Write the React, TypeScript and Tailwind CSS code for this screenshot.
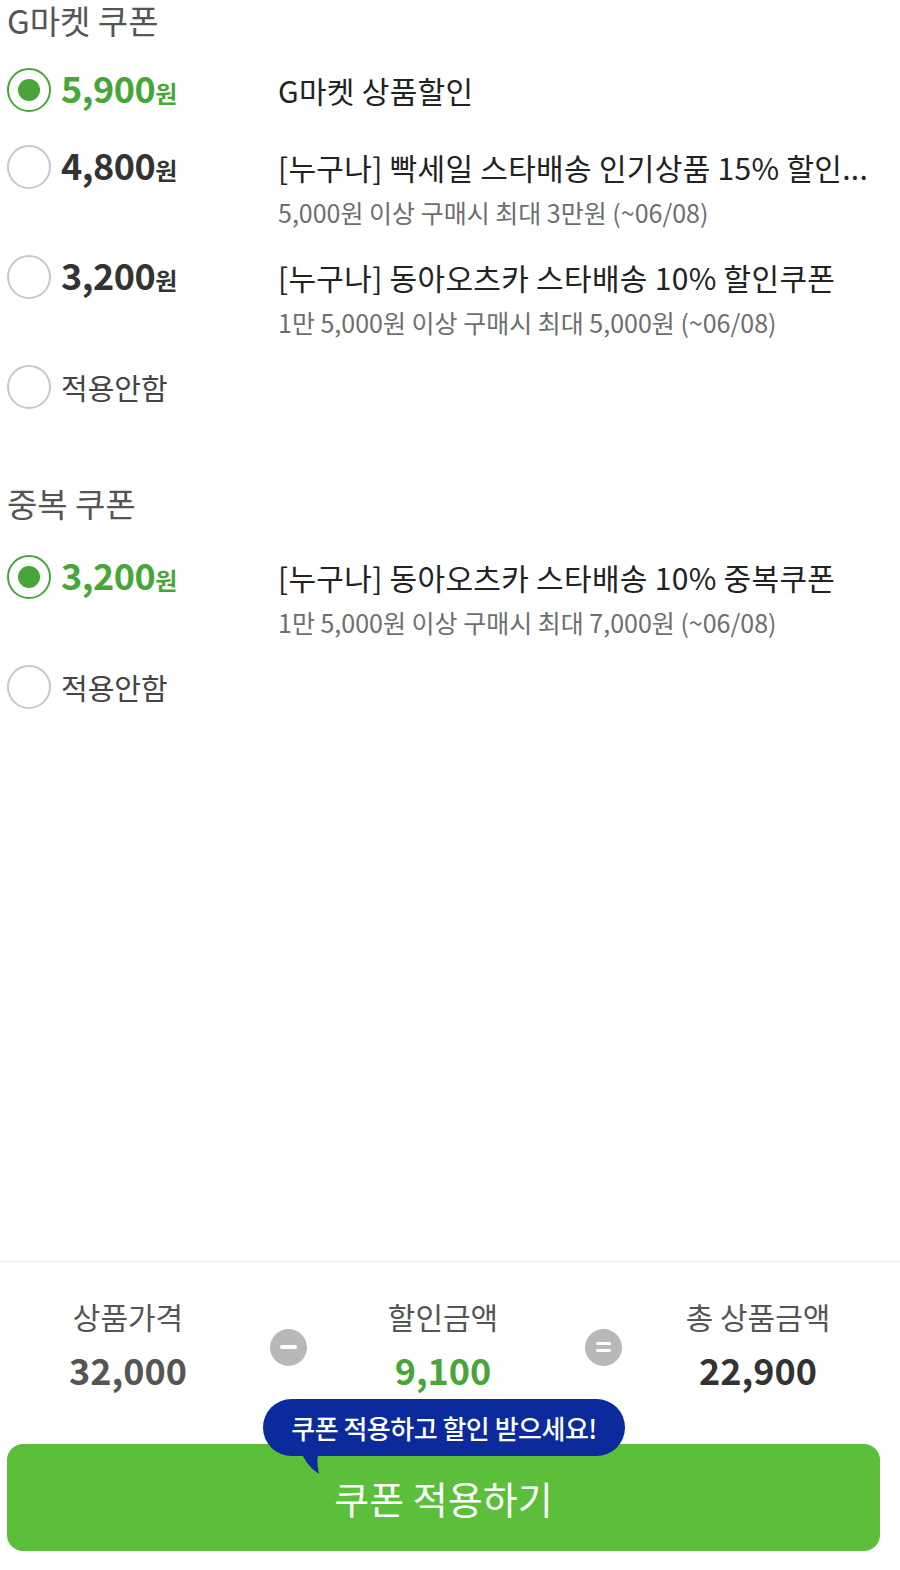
import React from 'react';

type Coupon = {
  id: string;
  amount?: string; // 없으면 "적용안함"
  title?: string;
  sub?: string;
};

const gmarketCoupons: Coupon[] = [
  { id: 'g1', amount: '5,900', title: 'G마켓 상품할인' },
  {
    id: 'g2',
    amount: '4,800',
    title: '[누구나] 빡세일 스타배송 인기상품 15% 할인...',
    sub: '5,000원 이상 구매시 최대 3만원 (~06/08)',
  },
  {
    id: 'g3',
    amount: '3,200',
    title: '[누구나] 동아오츠카 스타배송 10% 할인쿠폰',
    sub: '1만 5,000원 이상 구매시 최대 5,000원 (~06/08)',
  },
  { id: 'g4' },
];

const dupCoupons: Coupon[] = [
  {
    id: 'd1',
    amount: '3,200',
    title: '[누구나] 동아오츠카 스타배송 10% 중복쿠폰',
    sub: '1만 5,000원 이상 구매시 최대 7,000원 (~06/08)',
  },
  { id: 'd2' },
];

const Radio = ({ checked }: { checked: boolean }) => (
  <span
    className={`flex h-[44px] w-[44px] shrink-0 items-center justify-center rounded-full border-2 ${
      checked ? 'border-[#47a637]' : 'border-[#c8c8c8]'
    }`}
  >
    {checked && <span className="h-[22px] w-[22px] rounded-full bg-[#47a637]" />}
  </span>
);

const CouponRow = ({ coupon, checked, mt }: { coupon: Coupon; checked: boolean; mt: string }) => (
  <div className={`flex items-start ${mt}`}>
    <div className="flex h-[44px] w-[271px] shrink-0 items-center">
      <Radio checked={checked} />
      {coupon.amount ? (
        <span
          className={`ml-[10px] flex items-baseline font-bold ${checked ? 'text-[#47a637]' : 'text-[#333]'}`}
        >
          <span className="text-[36px] leading-[44px] tracking-[-0.5px]">{coupon.amount}</span>
          <span className="text-[24px] leading-[44px]">원</span>
        </span>
      ) : (
        <span className="ml-[10px] text-[29px] leading-[44px] text-[#444]">적용안함</span>
      )}
    </div>
    {coupon.title && (
      <div className="w-[590px]">
        <div className="whitespace-nowrap text-[30px] leading-[44px] tracking-[0.3px] text-[#222]">
          {coupon.title}
        </div>
        {coupon.sub && (
          <div className="mt-[5px] whitespace-nowrap text-[25px] leading-[36px] text-[#6e6e6e]">{coupon.sub}</div>
        )}
      </div>
    )}
  </div>
);

const CouponSection = ({
  title,
  coupons,
  selected,
  firstGap,
}: {
  title: string;
  coupons: Coupon[];
  selected: string;
  firstGap: string;
}) => (
  <section>
    <h2 className="text-[33px] leading-[40px] text-[#555]">{title}</h2>
    {coupons.map((c, i) => {
      // 이전 행에 부가설명이 없으면 간격이 조금 더 넓다
      const mt = i === 0 ? firstGap : coupons[i - 1].sub ? 'mt-[25px]' : 'mt-[33px]';
      return <CouponRow key={c.id} coupon={c} checked={c.id === selected} mt={mt} />;
    })}
  </section>
);

const OpCircle = ({ sign }: { sign: '-' | '=' }) => (
  <span className="ml-[6px] mt-[7px] flex h-[37px] w-[37px] items-center justify-center rounded-full bg-[#b8b8b8]">
    {sign === '-' ? (
      <span className="h-[4px] w-[17px] rounded-full bg-white" />
    ) : (
      <span className="flex flex-col gap-[4px]">
        <span className="h-[3px] w-[15px] rounded-full bg-white" />
        <span className="h-[3px] w-[15px] rounded-full bg-white" />
      </span>
    )}
  </span>
);

const Summary = ({ label, value, tone }: { label: string; value: string; tone: string }) => (
  <div className="flex w-[230px] flex-col items-center">
    <span className="text-[30px] leading-[36px] text-[#555]">{label}</span>
    <span className={`mt-[15px] text-[36px] font-bold leading-[40px] ${tone}`}>{value}</span>
  </div>
);

export default function App() {
  return (
    <div className="flex min-h-[1570px] flex-col bg-white font-['Noto_Sans_CJK_KR','Noto_Sans',sans-serif]">
      <div className="flex-1 px-[7px]">
        <CouponSection title="G마켓 쿠폰" coupons={gmarketCoupons} selected="g1" firstGap="mt-[28px]" />
        <div className="mt-[74px]">
          <CouponSection title="중복 쿠폰" coupons={dupCoupons} selected="d1" firstGap="mt-[32px]" />
        </div>
      </div>

      <footer className="h-[309px] border-t border-[#ececec] pt-[36px]">
        <div className="flex items-center px-[13px]">
          <Summary label="상품가격" value="32,000" tone="text-[#555]" />
          <div className="flex w-[85px] justify-center">
            <OpCircle sign="-" />
          </div>
          <Summary label="할인금액" value="9,100" tone="text-[#47a637]" />
          <div className="flex w-[85px] justify-center">
            <OpCircle sign="=" />
          </div>
          <Summary label="총 상품금액" value="22,900" tone="text-[#333]" />
        </div>

        <div className="relative mx-[7px] mt-[55px] mr-[20px]">
          <button className="flex h-[107px] w-full items-center justify-center rounded-[16px] bg-[#5cbf3b] text-[38px] text-white">
            쿠폰 적용하기
          </button>
          {/* 말풍선 */}
          <div className="absolute left-[256px] top-[-45px]">
            <div className="flex h-[57px] w-[362px] items-center justify-center rounded-full bg-[#0b2a9c] text-[26px] font-medium tracking-[-0.5px] text-white">
              쿠폰 적용하고 할인 받으세요!
            </div>
            <svg className="absolute left-[36px] top-[48px]" width="26" height="28" viewBox="0 0 26 28">
              <path d="M0 0 L22 0 Q16 10 20 27 Q6 18 0 0 Z" fill="#0b2a9c" />
            </svg>
          </div>
        </div>
      </footer>
    </div>
  );
}
